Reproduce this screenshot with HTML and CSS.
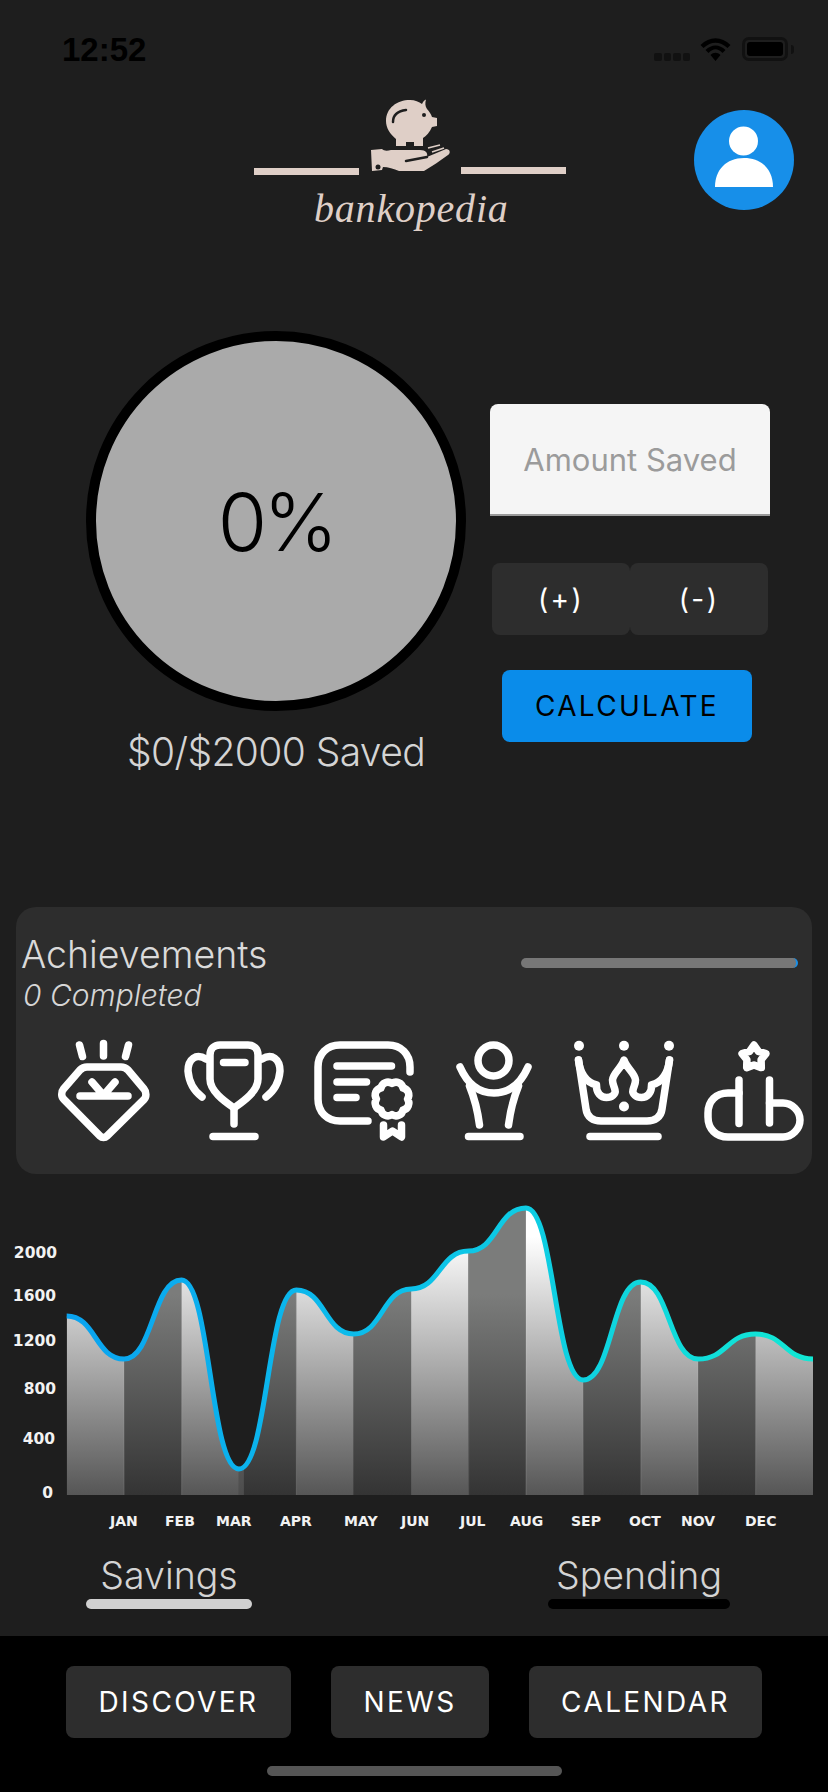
FILE: index.html
```html
<!DOCTYPE html>
<html lang="en">
<head>
<meta charset="utf-8">
<title>bankopedia</title>
<link rel="stylesheet" href="styles.css">
</head>
<body>
<div class="page">
  <div class="status">
    <span class="time">12:52</span>
    <div class="status-right">
      <div class="signal"><i></i><i></i><i></i><i></i></div>
      <svg class="wifi" viewBox="1 0 30 24"><path d="M1 8 C10 -1 22 -1 31 8 L28 11 C20 4 12 4 4 11Z M6 13 C12 7 20 7 26 13 L23 16 C18 11 14 11 9 16Z M11 18 C14 15 18 15 21 18 L16 24Z"/></svg>
      <div class="battery"><div class="battery-fill"></div></div>
      <div class="battery-nub"></div>
    </div>
  </div>

  <header class="header">
    <svg class="logo" viewBox="0 0 312 140">
      <rect class="logo-fill" x="0" y="69" width="105" height="7"/>
      <rect class="logo-fill" x="207" y="68" width="105" height="7"/>
      <path class="logo-fill" d="M172 .5 C171 4 171 7 173 10 C175 12 177 15 178 18 L183 19 V27 L178 28 C176 33 172 37 169 39 V47 H160 V43 H152 V47 H142 V40 C136 35 132 29 132 22 C132 9 143 1 156 1 C161 1 165 3 168 5 C169 3 170 1 172 .5 Z"/>
      <path class="logo-cut" d="M139 23 C139 16 144 12 152 11"/>
      <circle class="logo-dot" cx="170" cy="16" r="2"/>
      <path class="logo-fill" d="M117 51 L128 50 C130 52 133 52 137 51 L166 51 C172 51 174 54 173 58 L192 50 C196 50 197 54 194 56 C186 62 178 67 170 72 L145 72 C140 70 134 68 129 68 L128 71 L118 72 Z"/>
      <path class="logo-cut" d="M152 62 L173 58"/>
      <path class="logo-line" d="M174 49 L186 46 M178 53 L190 49"/>
      <circle class="logo-dot" cx="124" cy="68" r="2.5"/>
      <text class="logo-text" x="60" y="123">bankopedia</text>
    </svg>
    <svg class="avatar" viewBox="0 0 100 100">
      <circle class="avatar-bg" cx="50" cy="50" r="50"/>
      <ellipse class="avatar-fg" cx="49.5" cy="31" rx="14.5" ry="14.5"/>
      <path class="avatar-fg" d="M21 77 C21 60 32 48 50 48 C68 48 79 60 79 77 Z"/>
    </svg>
  </header>

  <main class="saver">
    <div class="gauge-col">
      <div class="gauge">0%</div>
      <div class="gauge-label">$0/$2000 Saved</div>
    </div>
    <div class="form-col">
      <input class="amount" type="text" placeholder="Amount Saved">
      <div class="adjust">
        <button class="btn btn-adjust">(+)</button>
        <button class="btn btn-adjust">(-)</button>
      </div>
      <button class="btn btn-calc">CALCULATE</button>
    </div>
  </main>

  <section class="card">
    <div class="card-head">
      <div>
        <div class="card-title">Achievements</div>
        <div class="card-sub">0 Completed</div>
      </div>
      <div class="progress"></div>
    </div>
    <div class="badges">
      <svg class="badge" viewBox="0 0 100 100">
        <path d="M25.5 4 L28.5 15.5 M49.5 2.5 V15 M74.5 4 L71.5 15.5"/>
        <path d="M33 26 H67 C70 26 72 27 74 29 L90 48 C92.5 51 92.5 56 90 58.5 L53 95 C51 97 48 97 46 95 L10 58.5 C7 56 7 51 9.5 48 L26 29 C28 27 30 26 33 26 Z"/>
        <path d="M26 55 H74 M38 41 L47.5 52 M61 41 L51.5 52"/>
      </svg>
      <svg class="badge" viewBox="0 0 100 100">
        <path d="M26 14 C26 8 30 4 36 4 H64 C70 4 74 8 74 14 V38 C74 50 60 60 50 67 C40 60 26 50 26 38 Z"/>
        <path d="M39.5 21.5 H61 M50 67 V83 M29 95.5 H71"/>
        <path d="M22 18 C12 12 4 18 4 30 C5 42 10 50 18 56 M78 18 C88 12 96 18 96 30 C95 42 90 50 82 56"/>
      </svg>
      <svg class="badge" viewBox="0 0 100 100">
        <path d="M54 80 H26 C13 80 4 71 4 58 V26 C4 13 13 4 26 4 H74 C87 4 96 13 96 26 V31"/>
        <path d="M23 25 H77.5 M23 41 H52.5 M23 56.5 H42"/>
        <path d="M93.5 58 A7 7 0 0 1 89 69 A7 7 0 0 1 78 73.5 A7 7 0 0 1 67 69 A7 7 0 0 1 62.5 58 A7 7 0 0 1 67 47 A7 7 0 0 1 78 42.5 A7 7 0 0 1 89 47 A7 7 0 0 1 93.5 58 Z"/>
        <path d="M69.5 84 V96 L78.5 90 L87.5 96 V84"/>
      </svg>
      <svg class="badge" viewBox="0 0 100 100">
        <circle cx="49.5" cy="19.5" r="15.5"/>
        <path d="M16 26 C23 42 33 52 50 52 C67 52 77 42 84 26"/>
        <path d="M25.5 45 C30 56 34 72 35.5 84 M74.5 45 C70 56 66 72 64.5 84 M24.5 95.5 H76"/>
      </svg>
      <svg class="badge" viewBox="0 0 100 100">
        <circle class="badge-dot" cx="5" cy="4.7" r="5"/>
        <circle class="badge-dot" cx="50" cy="4.7" r="5"/>
        <circle class="badge-dot" cx="95" cy="4.7" r="5"/>
        <circle class="badge-dot" cx="50" cy="65.5" r="5"/>
        <path d="M4.5 19 L12 68 C13 76 19 80 27 80 H73 C81 80 87 76 88 68 L95.5 19"/>
        <path d="M4.5 19 C6 32 11 41 22.5 44 C22 52 27 56.5 32.5 56.5 C38 56.5 42 53 41 49 C40 45 38.5 43 38.5 39 C39 32 47 28 50 19 C53 28 61 32 61.5 39 C61.5 43 60 45 59 49 C58 53 62 56.5 67.5 56.5 C73 56.5 78 52 77.5 44 C89 41 94 32 95.5 19"/>
        <path d="M16 95.5 H84"/>
      </svg>
      <svg class="badge" viewBox="0 0 100 100">
        <path d="M50 4 L54.4 10.4 L61.9 12.6 L57.1 18.8 L57.3 26.6 L50 24 L42.7 26.6 L42.9 18.8 L38.1 12.6 L45.6 10.4 Z"/>
        <path d="M35 39 V82.5 M65.5 39 V82"/>
        <path d="M35 52 H24 C12 52 4 60 4 72 V76 C4 88 12 96 24 96 H79 C88 96 96 88 96 79 C96 70 88 62 79 62 H65.5"/>
      </svg>
    </div>
  </section>

  <svg class="chart" viewBox="0 1195 828 340">
    <defs>
      <linearGradient id="lightFill" gradientUnits="userSpaceOnUse" x1="0" y1="1208" x2="0" y2="1495">
        <stop offset="0.1" stop-color="#ffffff"/>
        <stop offset="1" stop-color="#565656"/>
      </linearGradient>
      <linearGradient id="darkFill" gradientUnits="userSpaceOnUse" x1="0" y1="1208" x2="0" y2="1495">
        <stop offset="0.3" stop-color="#7b7c7b"/>
        <stop offset="1" stop-color="#343434"/>
      </linearGradient>
      <linearGradient id="lineStroke" gradientUnits="userSpaceOnUse" x1="66" y1="0" x2="813" y2="0">
        <stop offset="0" stop-color="#0aa3f0"/>
        <stop offset="0.45" stop-color="#0cc0ea"/>
        <stop offset="1" stop-color="#12e8d4"/>
      </linearGradient>
      <clipPath id="area">
        <path d="M66.7 1316 C95.4 1316 95.4 1359 124.1 1359 C152.8 1359 152.8 1280 181.5 1280 C210.2 1280 210.2 1469 238.9 1469 C267.6 1469 267.6 1290 296.3 1290 C325 1290 325 1334 353.7 1334 C382.4 1334 382.4 1289 411.1 1289 C439.8 1289 439.8 1251 468.5 1251 C497.2 1251 497.2 1208 525.9 1208 C554.6 1208 554.6 1380 583.3 1380 C612 1380 612 1282 640.7 1282 C669.4 1282 669.4 1359 698.1 1359 C726.8 1359 726.8 1334 755.5 1334 C784.2 1334 784.2 1359 813 1359 V1495 H66.7 Z"/>
      </clipPath>
    </defs>
    <g clip-path="url(#area)">
      <rect class="seg-l" x="66.7" y="1200" width="57.4" height="295"/>
      <rect class="seg-d" x="124.1" y="1200" width="57.4" height="295"/>
      <rect class="seg-l" x="181.5" y="1200" width="57.4" height="295"/>
      <rect class="seg-d" x="238.9" y="1200" width="57.4" height="295"/>
      <rect class="seg-l" x="296.3" y="1200" width="57.4" height="295"/>
      <rect class="seg-d" x="353.7" y="1200" width="57.4" height="295"/>
      <rect class="seg-l" x="411.1" y="1200" width="57.4" height="295"/>
      <rect class="seg-d" x="468.5" y="1200" width="57.4" height="295"/>
      <rect class="seg-l" x="525.9" y="1200" width="57.4" height="295"/>
      <rect class="seg-d" x="583.3" y="1200" width="57.4" height="295"/>
      <rect class="seg-l" x="640.7" y="1200" width="57.4" height="295"/>
      <rect class="seg-d" x="698.1" y="1200" width="57.4" height="295"/>
      <rect class="seg-l" x="755.5" y="1200" width="57.5" height="295"/>
      <rect class="seam" x="123.6" y="1200" width="1.2" height="295"/>
      <rect class="seam" x="181" y="1200" width="1.2" height="295"/>
      <rect class="seam" x="238.9" y="1200" width="5" height="295"/>
      <rect class="seam" x="295.8" y="1200" width="1.2" height="295"/>
      <rect class="seam" x="468" y="1200" width="1.2" height="295"/>
      <rect class="seam" x="525.4" y="1200" width="1.2" height="295"/>
      <rect class="seam" x="582.8" y="1200" width="1.2" height="295"/>
      <rect class="seam" x="640.2" y="1200" width="1.2" height="295"/>
      <rect class="seam" x="697.6" y="1200" width="1.2" height="295"/>
      <rect class="seam" x="755" y="1200" width="1.2" height="295"/>
    </g>
    <path class="chart-line" d="M66.7 1316 C95.4 1316 95.4 1359 124.1 1359 C152.8 1359 152.8 1280 181.5 1280 C210.2 1280 210.2 1469 238.9 1469 C267.6 1469 267.6 1290 296.3 1290 C325 1290 325 1334 353.7 1334 C382.4 1334 382.4 1289 411.1 1289 C439.8 1289 439.8 1251 468.5 1251 C497.2 1251 497.2 1208 525.9 1208 C554.6 1208 554.6 1380 583.3 1380 C612 1380 612 1282 640.7 1282 C669.4 1282 669.4 1359 698.1 1359 C726.8 1359 726.8 1334 755.5 1334 C784.2 1334 784.2 1359 813 1359"/>
    <g class="axis-y">
      <text x="57" y="1258">2000</text>
      <text x="56" y="1301">1600</text>
      <text x="56" y="1346">1200</text>
      <text x="56" y="1394">800</text>
      <text x="55" y="1444">400</text>
      <text x="53" y="1498">0</text>
    </g>
    <g class="axis-x">
      <text x="110" y="1526">JAN</text>
      <text x="165" y="1526">FEB</text>
      <text x="216" y="1526">MAR</text>
      <text x="280" y="1526">APR</text>
      <text x="344" y="1526">MAY</text>
      <text x="401" y="1526">JUN</text>
      <text x="460" y="1526">JUL</text>
      <text x="510" y="1526">AUG</text>
      <text x="571" y="1526">SEP</text>
      <text x="629" y="1526">OCT</text>
      <text x="681" y="1526">NOV</text>
      <text x="745" y="1526">DEC</text>
    </g>
  </svg>

  <div class="tabs">
    <div class="tab tab-savings"><span class="tab-label">Savings</span><div class="tab-bar bar-on"></div></div>
    <div class="tab tab-spending"><span class="tab-label">Spending</span><div class="tab-bar bar-off"></div></div>
  </div>

  <footer class="footer">
    <nav class="nav">
      <button class="btn btn-nav nav-discover">DISCOVER</button>
      <button class="btn btn-nav nav-news">NEWS</button>
      <button class="btn btn-nav nav-calendar">CALENDAR</button>
    </nav>
    <div class="home"></div>
  </footer>
</div>
</body>
</html>
```

FILE: styles.css
```css
* { box-sizing: border-box; }
html, body { margin: 0; padding: 0; background: #1e1e1e; }
.page {
  width: 828px;
  height: 1792px;
  display: flex;
  flex-direction: column;
  font-family: Inter, "Liberation Sans", sans-serif;
  overflow: hidden;
}

/* status bar */
.status {
  height: 99px;
  padding: 37px 34px 0 62px;
  display: flex;
  justify-content: space-between;
  align-items: flex-start;
}
.time {
  font-family: "Liberation Sans", sans-serif;
  font-weight: 700;
  font-size: 33px;
  line-height: 26px;
  color: #000;
}
.status-right { display: flex; align-items: flex-start; }
.signal { display: flex; gap: 2px; margin-top: 16px; margin-right: 10px; }
.signal i { width: 7.5px; height: 8px; border-radius: 2px; background: #111; display: block; }
.wifi { width: 31px; height: 24px; fill: #000; margin-right: 11px; }
.battery {
  width: 46px;
  height: 24px;
  border: 3px solid #111;
  border-radius: 7px;
  padding: 2px;
}
.battery-fill { width: 100%; height: 100%; background: #000; border-radius: 3px; }
.battery-nub { width: 3px; height: 9px; margin: 8px 0 0 3px; background: #111; border-radius: 0 3px 3px 0; }

/* header */
.header {
  height: 232px;
  padding: 0 34px 0 254px;
  display: flex;
  justify-content: space-between;
  align-items: flex-start;
}
.logo { width: 312px; height: 140px; display: block; }
.logo-fill { fill: #dfcfc7; }
.logo-cut { fill: none; stroke: #1e1e1e; stroke-width: 2.5; stroke-linecap: round; }
.logo-dot { fill: #1e1e1e; }
.logo-line { fill: none; stroke: #dfcfc7; stroke-width: 1.6; }
.logo-text {
  font-family: "Liberation Serif", serif;
  font-style: italic;
  font-size: 40px;
  letter-spacing: 0.8px;
  fill: #dfcfc7;
}
.avatar { width: 100px; height: 100px; margin-top: 11px; display: block; }
.avatar-bg { fill: #178fe9; }
.avatar-fg { fill: #fff; }

/* saver */
.saver {
  height: 576px;
  padding-left: 86px;
  display: flex;
  gap: 24px;
  align-items: flex-start;
}
.gauge-col { width: 380px; display: flex; flex-direction: column; align-items: center; }
.gauge {
  width: 380px;
  height: 380px;
  border-radius: 50%;
  border: 10px solid #000;
  background: #aaa;
  color: #000;
  font-size: 80px;
  font-weight: 300;
  letter-spacing: -4px;
  display: flex;
  align-items: center;
  justify-content: center;
}
.gauge-label {
  margin-top: 17px;
  font-size: 39px;
  letter-spacing: -0.6px;
  line-height: 48px;
  font-weight: 300;
  color: #d4d4d4;
  white-space: nowrap;
}
.form-col {
  width: 280px;
  padding-top: 73px;
  display: flex;
  flex-direction: column;
  align-items: center;
}
.amount {
  width: 280px;
  height: 112px;
  border: 0;
  border-bottom: 2px solid #9a9a9a;
  border-radius: 8px 8px 0 0;
  background: #f5f5f5;
  text-align: center;
  font-family: inherit;
  font-size: 31px;
  padding: 0;
  display: block;
}
.amount::placeholder { color: #9b9b9b; opacity: 1; }
.btn {
  border: 0;
  border-radius: 8px;
  font-family: inherit;
  font-size: 28px;
  padding: 0;
}
.adjust { display: flex; margin-top: 47px; }
.btn-adjust {
  width: 138px;
  height: 72px;
  background: #2d2d2d;
  color: #fff;
  letter-spacing: 2.4px;
}
.btn-calc {
  width: 250px;
  height: 72px;
  margin: 35px 6px 0 0;
  background: #0a8cea;
  color: #000;
  letter-spacing: 2.3px;
}

/* achievements */
.card {
  width: 796px;
  height: 267px;
  margin-left: 16px;
  border-radius: 20px;
  background: #2d2d2d;
  flex: none;
}
.card-head {
  display: flex;
  justify-content: space-between;
  align-items: flex-start;
  padding: 25px 14px 0 5px;
}
.card-title {
  font-size: 37.5px;
  line-height: 46px;
  font-weight: 300;
  color: #dadada;
}
.card-sub {
  font-size: 30px;
  line-height: 34px;
  font-weight: 300;
  font-style: italic;
  color: #d6d6d6;
  margin: 0 0 0 2px;
}
.progress {
  width: 277px;
  height: 10px;
  margin-top: 26px;
  border-radius: 5px;
  background: #777;
  border-right: 2px solid #178fe9;
}
.badges {
  display: flex;
  gap: 30px;
  padding: 29px 0 0 38px;
}
.badge {
  width: 100px;
  height: 100px;
  flex: none;
  fill: none;
  stroke: #fff;
  stroke-width: 7.5;
  stroke-linecap: round;
  stroke-linejoin: round;
  overflow: visible;
}
.badge-dot { fill: #fff; stroke: none; }

/* chart */
.chart { width: 828px; height: 340px; display: block; margin-top: 21px; flex: none; }
.seg-l { fill: url(#lightFill); }
.seg-d { fill: url(#darkFill); }
.seam { fill: #fff; fill-opacity: 0.12; }
.chart-line { fill: none; stroke: url(#lineStroke); stroke-width: 5; }
.axis-y text {
  font-family: "DejaVu Sans", sans-serif;
  font-weight: 700;
  font-size: 15.5px;
  fill: #f2f2f2;
  text-anchor: end;
}
.axis-x text {
  font-family: "DejaVu Sans", sans-serif;
  font-weight: 700;
  font-size: 14px;
  fill: #f2f2f2;
}

/* tabs */
.tabs {
  display: flex;
  padding-left: 86px;
  gap: 296px;
  margin-top: 18px;
}
.tab { display: flex; flex-direction: column; align-items: center; }
.tab-savings { width: 166px; }
.tab-spending { width: 182px; }
.tab-label { font-size: 37.5px; line-height: 46px; font-weight: 300; color: #d4d4d4; white-space: nowrap; }
.tab-bar { width: 100%; height: 10px; border-radius: 5px; }
.bar-on { background: #d0d0d0; }
.bar-off { background: #000; }

/* footer */
.footer {
  margin-top: auto;
  height: 156px;
  background: #000;
  padding-top: 30px;
  display: flex;
  flex-direction: column;
  align-items: center;
  flex: none;
}
.nav { display: flex; gap: 40px; }
.btn-nav {
  height: 72px;
  background: #2d2d2d;
  color: #fff;
  letter-spacing: 2.4px;
}
.nav-discover { width: 225px; }
.nav-news { width: 158px; }
.nav-calendar { width: 233px; }
.home { width: 295px; height: 10px; margin-top: 28px; border-radius: 5px; background: #555; }
```
